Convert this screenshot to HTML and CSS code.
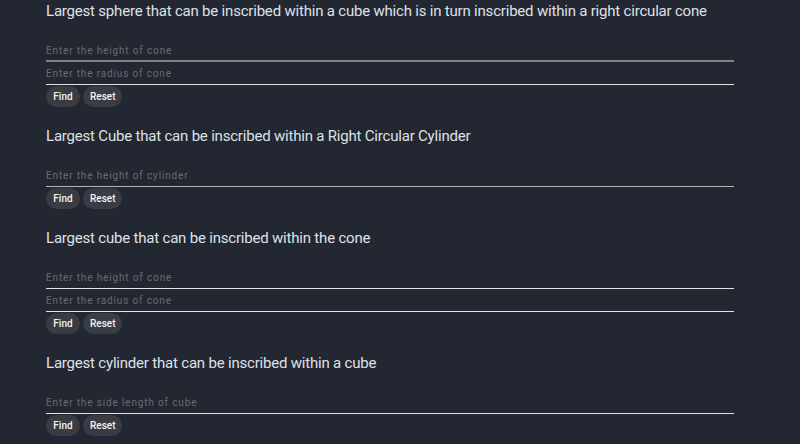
FILE: index.html
```html
<!DOCTYPE html>
<html lang="en">
<head>
<meta charset="utf-8">
<title>Inscribed solids</title>
<link rel="stylesheet" href="styles.css">
</head>
<body>
<main class="page">
  <section class="calc">
    <h2 class="calc-title">Largest sphere that can be inscribed within a cube which is in turn inscribed within a right circular cone</h2>
    <div class="field field-hover"><input class="field-input" type="text" placeholder="Enter the height of cone"></div>
    <div class="field"><input class="field-input" type="text" placeholder="Enter the radius of cone"></div>
    <div class="actions"><button class="btn">Find</button><button class="btn">Reset</button></div>
  </section>
  <section class="calc">
    <h2 class="calc-title">Largest Cube that can be inscribed within a Right Circular Cylinder</h2>
    <div class="field field-dim"><input class="field-input" type="text" placeholder="Enter the height of cylinder"></div>
    <div class="actions"><button class="btn">Find</button><button class="btn">Reset</button></div>
  </section>
  <section class="calc">
    <h2 class="calc-title">Largest cube that can be inscribed within the cone</h2>
    <div class="field"><input class="field-input" type="text" placeholder="Enter the height of cone"></div>
    <div class="field"><input class="field-input" type="text" placeholder="Enter the radius of cone"></div>
    <div class="actions"><button class="btn">Find</button><button class="btn">Reset</button></div>
  </section>
  <section class="calc">
    <h2 class="calc-title">Largest cylinder that can be inscribed within a cube</h2>
    <div class="field"><input class="field-input" type="text" placeholder="Enter the side length of cube"></div>
    <div class="actions"><button class="btn">Find</button><button class="btn">Reset</button></div>
  </section>
</main>
</body>
</html>
```
FILE: styles.css
```css
html, body {
  margin: 0;
  padding: 0;
  background: #232731;
  overflow: hidden;
}
.page {
  padding: 1px 0 0 46px;
  width: 688px;
  font-family: Roboto, "Liberation Sans", sans-serif;
}
.calc {
  display: flex;
  flex-direction: column;
  margin-bottom: 19px;
}
.calc-title {
  margin: 0 0 18px;
  font-size: 15px;
  line-height: 20px;
  font-weight: 400;
  letter-spacing: -0.2px;
  color: #dde1e8;
  white-space: nowrap;
}
.field {
  height: 23px;
  box-sizing: border-box;
  border-bottom: 1px solid #e3e4e8;
  display: flex;
  align-items: flex-end;
}
.field-hover {
  border-bottom: 2px solid #808287;
}
.field-dim {
  border-bottom-color: #b4b6bb;
}
.field-input {
  width: 100%;
  border: 0;
  outline: 0;
  background: transparent;
  padding: 0 0 5px;
  margin: 0;
  font-family: Roboto, "Liberation Sans", sans-serif;
  font-size: 10px;
  letter-spacing: 0.85px;
  color: #dde1e8;
}
.field-hover .field-input {
  padding-bottom: 4px;
}
.field-input::placeholder {
  color: #686b72;
  opacity: 1;
}
.actions {
  display: flex;
  gap: 3px;
  margin-top: 1px;
}
.btn {
  height: 21px;
  min-width: 34px;
  padding: 0 7px;
  border: 0;
  border-radius: 11px;
  background: #393c42;
  color: #f2f3f5;
  font-family: Roboto, "Liberation Sans", sans-serif;
  font-size: 10px;
  font-weight: 500;
}
```
